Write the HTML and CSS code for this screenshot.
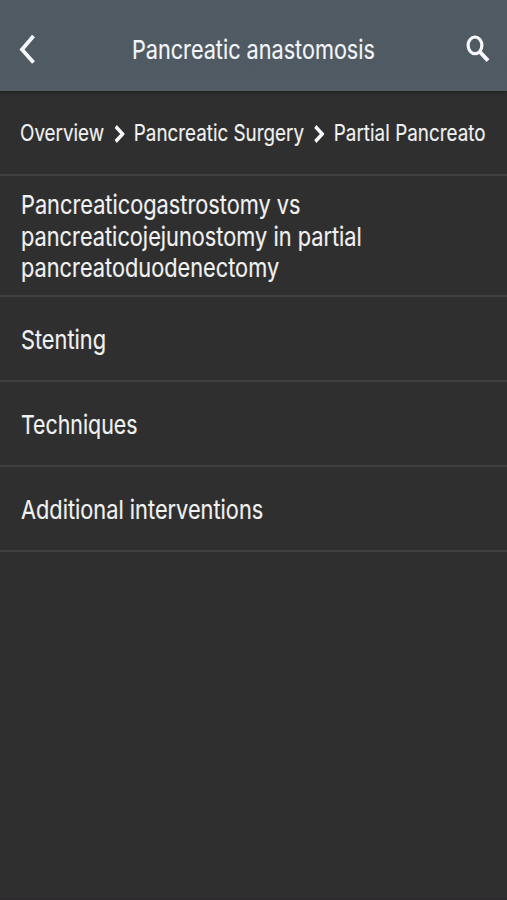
FILE: index.html
```html
<!DOCTYPE html>
<html lang="en">
<head>
<meta charset="utf-8">
<title>Pancreatic anastomosis</title>
<link rel="stylesheet" href="styles.css">
</head>
<body>
<header class="bar">
  <svg class="back" width="18" height="34" viewBox="0 0 18 34" aria-hidden="true"><path d="M14.5 4 3 17.4 14.5 30.5"/></svg>
  <h1 class="title"><span class="condensed">Pancreatic anastomosis</span></h1>
  <svg class="search" width="24" height="28" viewBox="0 0 24 28" aria-hidden="true"><ellipse cx="9" cy="10.3" rx="6.9" ry="8.3"/><path class="handle" d="M13.5 16.5 22 25.7"/></svg>
</header>
<nav class="crumbs">
  <div class="trail">
    <span>Overview</span>
    <svg class="sep" width="13" height="18" viewBox="0 0 13 18"><path d="M2 1.5 10.5 9 2 16.5"/></svg>
    <span>Pancreatic Surgery</span>
    <svg class="sep" width="13" height="18" viewBox="0 0 13 18"><path d="M2 1.5 10.5 9 2 16.5"/></svg>
    <span class="current">Partial Pancreato</span>
  </div>
</nav>
<ul class="list">
  <li class="row tall"><span class="condensed">Pancreaticogastrostomy vs<br>pancreaticojejunostomy in partial<br>pancreatoduodenectomy</span></li>
  <li class="row"><span class="condensed">Stenting</span></li>
  <li class="row"><span class="condensed narrow">Techniques</span></li>
  <li class="row"><span class="condensed">Additional interventions</span></li>
</ul>
</body>
</html>
```

FILE: styles.css
```css
* { box-sizing: border-box; }
body {
  margin: 0;
  height: 900px;
  overflow: hidden;
  background: #2f2f2f;
  border-bottom: 1px solid #30282c;
  color: #f1f1f1;
  font: 400 26px/31.5px Inter, "Liberation Sans", sans-serif;
  -webkit-text-stroke: .15px;
}
.bar {
  display: flex;
  align-items: center;
  justify-content: space-between;
  height: 91px;
  padding: 8px 17px 0 19px;
  background: linear-gradient(#505b63, #505a62 80%, #535c66);
  box-shadow: 0 1px 3px #1c1c1c;
  color: #f3f6fb;
}
svg { flex: none; fill: none; stroke: #f6f8fc; }
.back { stroke-width: 3.8; margin-bottom: 1px; }
.search { stroke-width: 3.2; margin-bottom: 2px; }
.handle { stroke-width: 4; }
.title { margin: 0 0 0 2px; width: 241px; font: inherit; white-space: nowrap; }
.condensed { display: inline-block; transform: scaleX(.837); transform-origin: 0 50%; white-space: nowrap; }
.title .condensed { transform: scaleX(.832); }
.row .narrow { transform: scaleX(.82); }
.crumbs {
  height: 84.5px;
  padding: 2px 0 0 20px;
  border-bottom: 2px solid #3f3f3f;
}
.trail {
  display: flex;
  align-items: center;
  gap: 11.7px;
  width: 572px;
  height: 82px;
  overflow: hidden;
  font-size: 23px;
  white-space: nowrap;
  transform: scaleX(.818);
  transform-origin: 0 50%;
}
.current { letter-spacing: .05px; }
.sep { stroke-width: 3.9; }
.list { margin: 0; padding: 0; list-style: none; }
.row {
  display: flex;
  align-items: center;
  height: 85px;
  padding: 2px 20px 0 20.6px;
  border-bottom: 2px solid #3f3f3f;
}
.tall { height: 121.5px; }
```
